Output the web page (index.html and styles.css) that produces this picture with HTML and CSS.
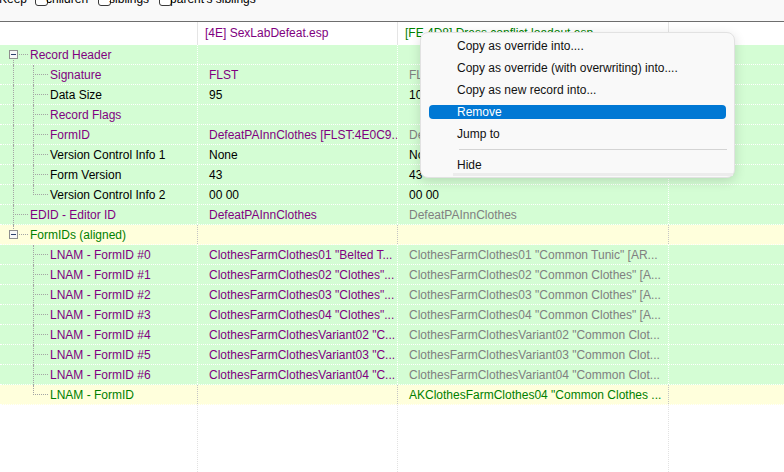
FILE: index.html
```html
<!DOCTYPE html>
<html lang="en">
<head>
  <meta charset="UTF-8">
  <title>FLST - DefeatPAInnClothes</title>
  <link rel="stylesheet" href="styles.css">
</head>
<body>
  <div class="toolbar">
    <div class="keep">
      <span>Keep</span>
      <label><span class="cb"></span>children</label>
      <label><span class="cb"></span>siblings</label>
      <label><span class="cb"></span>parent's siblings</label>
    </div>
  </div>

  <div class="grid">
    <div class="row head">
      <div class="c c1"></div>
      <div class="c c2 p">[4E] SexLabDefeat.esp</div>
      <div class="c c3 gn">[FE 4D8] Dress conflict loadout.esp</div>
      <div class="c c4"></div>
    </div>

    <!-- Record Header -->
    <div class="row rec">
      <div class="c c1"><span class="g box first"><svg width="9" height="9"><rect x="0.5" y="0.5" width="8" height="8" fill="#f7f7f7" stroke="#8e8e8e"/><path d="M2 4.5h5" stroke="#2b3f6c"/></svg></span><span class="lbl p">Record Header</span></div>
      <div class="c c2"></div>
      <div class="c c3"></div>
      <div class="c c4"></div>
    </div>
    <div class="row rec">
      <div class="c c1"><span class="g v"></span><span class="g t"></span><span class="lbl p">Signature</span></div>
      <div class="c c2 p">FLST</div>
      <div class="c c3 gr">FLST</div>
      <div class="c c4"></div>
    </div>
    <div class="row rec">
      <div class="c c1"><span class="g v"></span><span class="g t"></span><span class="lbl">Data Size</span></div>
      <div class="c c2">95</div>
      <div class="c c3">105</div>
      <div class="c c4"></div>
    </div>
    <div class="row rec">
      <div class="c c1"><span class="g v"></span><span class="g t"></span><span class="lbl p">Record Flags</span></div>
      <div class="c c2"></div>
      <div class="c c3"></div>
      <div class="c c4"></div>
    </div>
    <div class="row rec">
      <div class="c c1"><span class="g v"></span><span class="g t"></span><span class="lbl p">FormID</span></div>
      <div class="c c2 p">DefeatPAInnClothes [FLST:4E0C9...</div>
      <div class="c c3 gr">DefeatPAInnClothes [FLST:4E0C9...</div>
      <div class="c c4"></div>
    </div>
    <div class="row rec">
      <div class="c c1"><span class="g v"></span><span class="g t"></span><span class="lbl">Version Control Info 1</span></div>
      <div class="c c2">None</div>
      <div class="c c3">None</div>
      <div class="c c4"></div>
    </div>
    <div class="row rec">
      <div class="c c1"><span class="g v"></span><span class="g t"></span><span class="lbl">Form Version</span></div>
      <div class="c c2">43</div>
      <div class="c c3">43</div>
      <div class="c c4"></div>
    </div>
    <div class="row rec">
      <div class="c c1"><span class="g v"></span><span class="g l"></span><span class="lbl">Version Control Info 2</span></div>
      <div class="c c2">00 00</div>
      <div class="c c3">00 00</div>
      <div class="c c4"></div>
    </div>

    <!-- EDID -->
    <div class="row rec">
      <div class="c c1"><span class="g t"></span><span class="lbl p">EDID - Editor ID</span></div>
      <div class="c c2 p">DefeatPAInnClothes</div>
      <div class="c c3 gr">DefeatPAInnClothes</div>
      <div class="c c4"></div>
    </div>

    <!-- FormIDs -->
    <div class="row rec warn">
      <div class="c c1"><span class="g box last"><svg width="9" height="9"><rect x="0.5" y="0.5" width="8" height="8" fill="#f7f7f7" stroke="#8e8e8e"/><path d="M2 4.5h5" stroke="#2b3f6c"/></svg></span><span class="lbl gn">FormIDs (aligned)</span></div>
      <div class="c c2"></div>
      <div class="c c3"></div>
      <div class="c c4"></div>
    </div>
    <div class="row rec">
      <div class="c c1"><span class="g"></span><span class="g t"></span><span class="lbl p">LNAM - FormID #0</span></div>
      <div class="c c2 p">ClothesFarmClothes01 "Belted T...</div>
      <div class="c c3 gr">ClothesFarmClothes01 "Common Tunic" [AR...</div>
      <div class="c c4"></div>
    </div>
    <div class="row rec">
      <div class="c c1"><span class="g"></span><span class="g t"></span><span class="lbl p">LNAM - FormID #1</span></div>
      <div class="c c2 p">ClothesFarmClothes02 "Clothes"...</div>
      <div class="c c3 gr">ClothesFarmClothes02 "Common Clothes" [A...</div>
      <div class="c c4"></div>
    </div>
    <div class="row rec">
      <div class="c c1"><span class="g"></span><span class="g t"></span><span class="lbl p">LNAM - FormID #2</span></div>
      <div class="c c2 p">ClothesFarmClothes03 "Clothes"...</div>
      <div class="c c3 gr">ClothesFarmClothes03 "Common Clothes" [A...</div>
      <div class="c c4"></div>
    </div>
    <div class="row rec">
      <div class="c c1"><span class="g"></span><span class="g t"></span><span class="lbl p">LNAM - FormID #3</span></div>
      <div class="c c2 p">ClothesFarmClothes04 "Clothes"...</div>
      <div class="c c3 gr">ClothesFarmClothes04 "Common Clothes" [A...</div>
      <div class="c c4"></div>
    </div>
    <div class="row rec">
      <div class="c c1"><span class="g"></span><span class="g t"></span><span class="lbl p">LNAM - FormID #4</span></div>
      <div class="c c2 p">ClothesFarmClothesVariant02 "C...</div>
      <div class="c c3 gr">ClothesFarmClothesVariant02 "Common Clot...</div>
      <div class="c c4"></div>
    </div>
    <div class="row rec">
      <div class="c c1"><span class="g"></span><span class="g t"></span><span class="lbl p">LNAM - FormID #5</span></div>
      <div class="c c2 p">ClothesFarmClothesVariant03 "C...</div>
      <div class="c c3 gr">ClothesFarmClothesVariant03 "Common Clot...</div>
      <div class="c c4"></div>
    </div>
    <div class="row rec">
      <div class="c c1"><span class="g"></span><span class="g t"></span><span class="lbl p">LNAM - FormID #6</span></div>
      <div class="c c2 p">ClothesFarmClothesVariant04 "C...</div>
      <div class="c c3 gr">ClothesFarmClothesVariant04 "Common Clot...</div>
      <div class="c c4"></div>
    </div>
    <div class="row rec warn">
      <div class="c c1"><span class="g"></span><span class="g l"></span><span class="lbl gn">LNAM - FormID</span></div>
      <div class="c c2"></div>
      <div class="c c3 gn">AKClothesFarmClothes04 "Common Clothes ...</div>
      <div class="c c4"></div>
    </div>

    <div class="row filler">
      <div class="c c1"></div>
      <div class="c c2"></div>
      <div class="c c3"></div>
      <div class="c c4"></div>
    </div>
  </div>

  <div class="menu">
    <div class="mi">Copy as override into....</div>
    <div class="mi">Copy as override (with overwriting) into....</div>
    <div class="mi">Copy as new record into...</div>
    <div class="mi on"><span>Remove</span></div>
    <div class="mi">Jump to</div>
    <div class="sep"></div>
    <div class="mi hide">Hide</div>
    <div class="foot"></div>
  </div>
</body>
</html>
```

FILE: styles.css
```css
body {
  margin: 0;
  width: 784px;
  height: 472px;
  overflow: hidden;
  font-family: 'Liberation Sans', Arial, sans-serif;
  font-size: 12px;
  color: #000;
  background: #fff;
  display: flex;
  flex-direction: column;
}

/* top strip, scrolled so only the bottom of it shows */
.toolbar {
  flex: none;
  height: 21px;
  background: #f9f9f9;
  border-bottom: 1px solid #6e6e6e;
  overflow: hidden;
}

.keep {
  display: flex;
  align-items: center;
  gap: 10px;
  height: 15px;
  line-height: 15px;
  margin-top: -8px;
  margin-left: -1px;
}

.keep label {
  display: flex;
  align-items: center;
}

.keep span:first-child {
  margin-right: -2px;
}

.cb {
  width: 11px;
  height: 11px;
  border: 1px solid #3a3a3a;
  border-radius: 3px;
  background: #fff;
  margin-right: 3px;
}

/* record view */
.grid {
  flex: 1;
  display: flex;
  flex-direction: column;
}

.row {
  display: flex;
  flex: none;
}

.c {
  box-sizing: border-box;
  white-space: nowrap;
  overflow: hidden;
}

.c1 { width: 198px; }
.c2 { width: 200px; }
.c3 { width: 271px; }
.c4 { flex: 1; }

.head {
  height: 23px;
}

.head .c {
  line-height: 23px;
  padding-left: 7px;
  border-right: 1px solid #e5e5e5;
}

.head .c4 {
  border-right: none;
}

.rec {
  height: 20px;
  box-sizing: border-box;
  background: #d4fdd4;
  border-bottom: 1px dotted #fff;
}

.rec.warn {
  background: #ffffdc;
}

.rec .c {
  line-height: 21px;
  border-right: 1px dotted #fff;
}

.rec.warn .c {
  border-right-color: #c4c4c4;
}

.rec .c2, .rec .c3 {
  padding-left: 11px;
}

.rec .c4 {
  border-right: none;
}

.filler {
  flex: 1;
}

.filler .c {
  border-right: 1px dotted #e2e2e2;
}

.filler .c4 {
  border-right: none;
}

/* tree lines */
.rec .c1 {
  display: flex;
  padding-left: 3px;
  overflow: visible;
}

.g {
  flex: none;
  width: 20px;
  position: relative;
}

.g::before, .g::after {
  position: absolute;
}

.g.v::before, .g.t::before {
  content: "";
  left: 10px;
  top: 0;
  bottom: -1px;
  border-left: 1px dotted #a4a4a4;
}

.g.l::before {
  content: "";
  left: 10px;
  top: 0;
  height: 10px;
  border-left: 1px dotted #a4a4a4;
}

.g.t::after, .g.l::after {
  content: "";
  left: 12px;
  top: 9px;
  width: 13px;
  border-top: 1px dotted #a4a4a4;
}

.g.box {
  display: flex;
  align-items: center;
}

.g.box svg {
  display: block;
  margin-left: 6px;
}

.g.box::after {
  content: "";
  left: 16px;
  top: 9px;
  width: 9px;
  border-top: 1px dotted #a4a4a4;
}

.g.box.first::before {
  content: "";
  left: 10px;
  top: 15px;
  bottom: -1px;
  border-left: 1px dotted #a4a4a4;
}

.g.box.last::before {
  content: "";
  left: 10px;
  top: 0;
  height: 4px;
  border-left: 1px dotted #a4a4a4;
}

.lbl {
  padding-left: 7px;
}

.p { color: #800080; }
.gr { color: #808080; }
.gn { color: #008000; }

/* context menu */
.menu {
  position: absolute;
  left: 420px;
  top: 32px;
  width: 315px;
  box-sizing: border-box;
  padding: 2px 0 1px;
  background: #f9f9f9;
  border: 1px solid #e2e2e2;
  border-radius: 8px;
  box-shadow: 0 3px 12px rgba(0, 0, 0, 0.14);
  color: #111;
}

.mi {
  height: 22px;
  line-height: 22px;
  padding-left: 36px;
  white-space: nowrap;
}

.mi.on {
  padding: 4px 8px;
  height: 14px;
}

.mi.on span {
  display: block;
  height: 14px;
  line-height: 14px;
  padding-left: 28px;
  border-radius: 4px;
  background: #0078d4;
  color: #fff;
}

.mi.hide {
  height: 20px;
  line-height: 24px;
}

.sep {
  height: 1px;
  margin: 4px 7px 3px 38px;
  background: #d4d4d4;
}

.foot {
  height: 3px;
  margin: 0 1px 0 32px;
  background: #ececec;
}
```
